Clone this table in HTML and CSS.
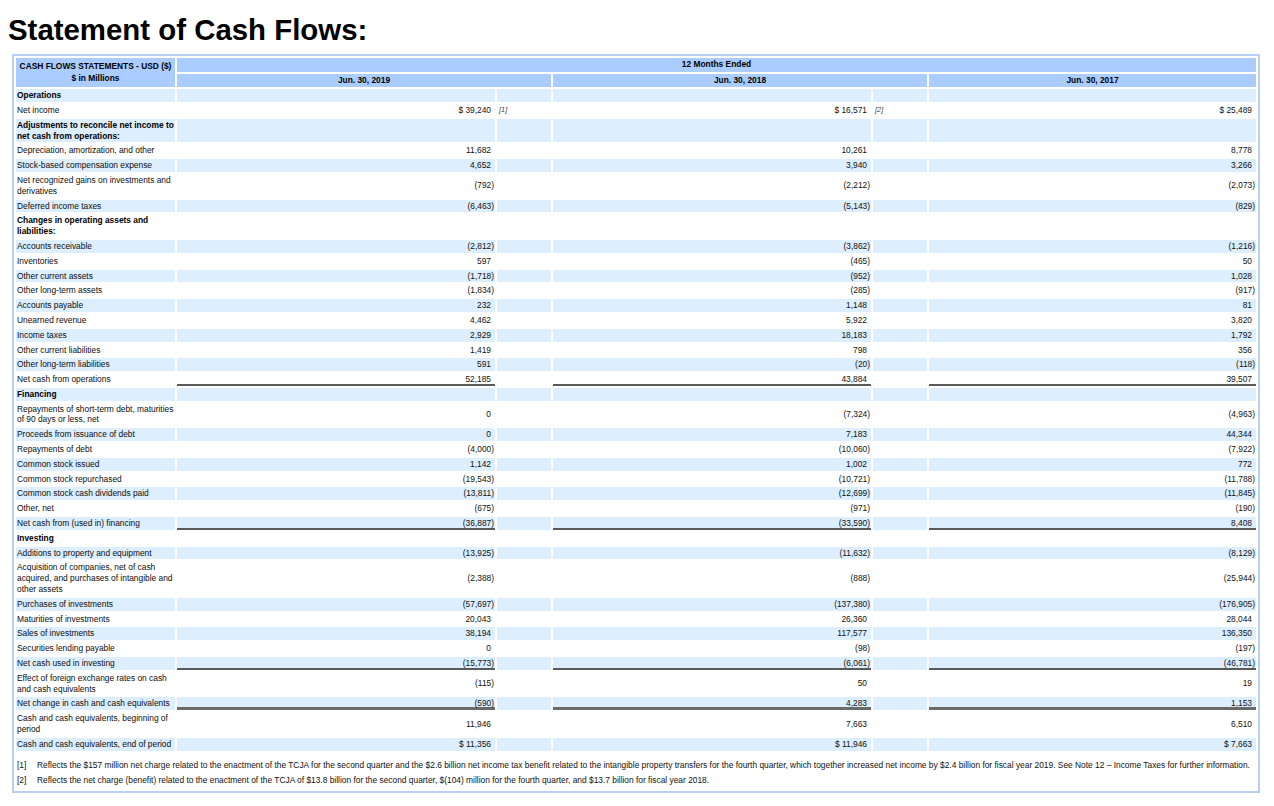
FILE: index.html
```html
<!DOCTYPE html>
<html lang="en">
<head>
<meta charset="utf-8">
<title>Statement of Cash Flows</title>
<link rel="stylesheet" href="styles.css">
</head>
<body>
<h1 class="page-title">Statement of Cash Flows:</h1>
<div class="report">
  <table class="statement">
    <colgroup>
      <col class="c-label"><col class="c-val"><col class="c-fn"><col class="c-val"><col class="c-fn"><col class="c-last">
    </colgroup>
    <thead>
      <tr><th rowspan="2" class="tl">CASH FLOWS STATEMENTS - USD ($)<br>$ in Millions</th><th colspan="5">12 Months Ended</th></tr>
      <tr><th colspan="2">Jun. 30, 2019</th><th colspan="2">Jun. 30, 2018</th><th>Jun. 30, 2017</th></tr>
    </thead>
    <tbody>
      <tr><td class="pl b">Operations</td><td></td><td></td><td></td><td></td><td></td></tr>
      <tr><td class="pl">Net income</td><td class="v">$ 39,240</td><td class="fn">[1]</td><td class="v">$ 16,571</td><td class="fn">[2]</td><td class="v">$ 25,489</td></tr>
      <tr><td class="pl b">Adjustments to reconcile net income to net cash from operations:</td><td></td><td></td><td></td><td></td><td></td></tr>
      <tr><td class="pl">Depreciation, amortization, and other</td><td class="v">11,682</td><td></td><td class="v">10,261</td><td></td><td class="v">8,778</td></tr>
      <tr><td class="pl">Stock-based compensation expense</td><td class="v">4,652</td><td></td><td class="v">3,940</td><td></td><td class="v">3,266</td></tr>
      <tr><td class="pl">Net recognized gains on investments and derivatives</td><td class="v n">(792)</td><td></td><td class="v n">(2,212)</td><td></td><td class="v n">(2,073)</td></tr>
      <tr><td class="pl">Deferred income taxes</td><td class="v n">(6,463)</td><td></td><td class="v n">(5,143)</td><td></td><td class="v n">(829)</td></tr>
      <tr><td class="pl b">Changes in operating assets and liabilities:</td><td></td><td></td><td></td><td></td><td></td></tr>
      <tr><td class="pl">Accounts receivable</td><td class="v n">(2,812)</td><td></td><td class="v n">(3,862)</td><td></td><td class="v n">(1,216)</td></tr>
      <tr><td class="pl">Inventories</td><td class="v">597</td><td></td><td class="v n">(465)</td><td></td><td class="v">50</td></tr>
      <tr><td class="pl">Other current assets</td><td class="v n">(1,718)</td><td></td><td class="v n">(952)</td><td></td><td class="v">1,028</td></tr>
      <tr><td class="pl">Other long-term assets</td><td class="v n">(1,834)</td><td></td><td class="v n">(285)</td><td></td><td class="v n">(917)</td></tr>
      <tr><td class="pl">Accounts payable</td><td class="v">232</td><td></td><td class="v">1,148</td><td></td><td class="v">81</td></tr>
      <tr><td class="pl">Unearned revenue</td><td class="v">4,462</td><td></td><td class="v">5,922</td><td></td><td class="v">3,820</td></tr>
      <tr><td class="pl">Income taxes</td><td class="v">2,929</td><td></td><td class="v">18,183</td><td></td><td class="v">1,792</td></tr>
      <tr><td class="pl">Other current liabilities</td><td class="v">1,419</td><td></td><td class="v">798</td><td></td><td class="v">356</td></tr>
      <tr><td class="pl">Other long-term liabilities</td><td class="v">591</td><td></td><td class="v n">(20)</td><td></td><td class="v n">(118)</td></tr>
      <tr class="total"><td class="pl">Net cash from operations</td><td class="v">52,185</td><td></td><td class="v">43,884</td><td></td><td class="v">39,507</td></tr>
      <tr><td class="pl b">Financing</td><td></td><td></td><td></td><td></td><td></td></tr>
      <tr><td class="pl">Repayments of short-term debt, maturities of 90 days or less, net</td><td class="v">0</td><td></td><td class="v n">(7,324)</td><td></td><td class="v n">(4,963)</td></tr>
      <tr><td class="pl">Proceeds from issuance of debt</td><td class="v">0</td><td></td><td class="v">7,183</td><td></td><td class="v">44,344</td></tr>
      <tr><td class="pl">Repayments of debt</td><td class="v n">(4,000)</td><td></td><td class="v n">(10,060)</td><td></td><td class="v n">(7,922)</td></tr>
      <tr><td class="pl">Common stock issued</td><td class="v">1,142</td><td></td><td class="v">1,002</td><td></td><td class="v">772</td></tr>
      <tr><td class="pl">Common stock repurchased</td><td class="v n">(19,543)</td><td></td><td class="v n">(10,721)</td><td></td><td class="v n">(11,788)</td></tr>
      <tr><td class="pl">Common stock cash dividends paid</td><td class="v n">(13,811)</td><td></td><td class="v n">(12,699)</td><td></td><td class="v n">(11,845)</td></tr>
      <tr><td class="pl">Other, net</td><td class="v n">(675)</td><td></td><td class="v n">(971)</td><td></td><td class="v n">(190)</td></tr>
      <tr class="total"><td class="pl">Net cash from (used in) financing</td><td class="v n">(36,887)</td><td></td><td class="v n">(33,590)</td><td></td><td class="v">8,408</td></tr>
      <tr><td class="pl b">Investing</td><td></td><td></td><td></td><td></td><td></td></tr>
      <tr><td class="pl">Additions to property and equipment</td><td class="v n">(13,925)</td><td></td><td class="v n">(11,632)</td><td></td><td class="v n">(8,129)</td></tr>
      <tr><td class="pl">Acquisition of companies, net of cash acquired, and purchases of intangible and other assets</td><td class="v n">(2,388)</td><td></td><td class="v n">(888)</td><td></td><td class="v n">(25,944)</td></tr>
      <tr><td class="pl">Purchases of investments</td><td class="v n">(57,697)</td><td></td><td class="v n">(137,380)</td><td></td><td class="v n">(176,905)</td></tr>
      <tr><td class="pl">Maturities of investments</td><td class="v">20,043</td><td></td><td class="v">26,360</td><td></td><td class="v">28,044</td></tr>
      <tr><td class="pl">Sales of investments</td><td class="v">38,194</td><td></td><td class="v">117,577</td><td></td><td class="v">136,350</td></tr>
      <tr><td class="pl">Securities lending payable</td><td class="v">0</td><td></td><td class="v n">(98)</td><td></td><td class="v n">(197)</td></tr>
      <tr class="total"><td class="pl">Net cash used in investing</td><td class="v n">(15,773)</td><td></td><td class="v n">(6,061)</td><td></td><td class="v n">(46,781)</td></tr>
      <tr><td class="pl">Effect of foreign exchange rates on cash and cash equivalents</td><td class="v n">(115)</td><td></td><td class="v">50</td><td></td><td class="v">19</td></tr>
      <tr class="total strong"><td class="pl">Net change in cash and cash equivalents</td><td class="v n">(590)</td><td></td><td class="v">4,283</td><td></td><td class="v">1,153</td></tr>
      <tr><td class="pl">Cash and cash equivalents, beginning of period</td><td class="v">11,946</td><td></td><td class="v">7,663</td><td></td><td class="v">6,510</td></tr>
      <tr><td class="pl">Cash and cash equivalents, end of period</td><td class="v">$ 11,356</td><td></td><td class="v">$ 11,946</td><td></td><td class="v">$ 7,663</td></tr>
    </tbody>
  </table>
  <table class="notes">
    <tr><td class="mk">[1]</td><td class="tx">Reflects the $157 million net charge related to the enactment of the TCJA for the second quarter and the $2.6 billion net income tax benefit related to the intangible property transfers for the fourth quarter, which together increased net income by $2.4 billion for fiscal year 2019. See Note 12 – Income Taxes for further information.</td></tr>
    <tr><td class="mk">[2]</td><td class="tx">Reflects the net charge (benefit) related to the enactment of the TCJA of $13.8 billion for the second quarter, $(104) million for the fourth quarter, and $13.7 billion for fiscal year 2018.</td></tr>
  </table>
</div>
</body>
</html>
```

FILE: styles.css
```css
html, body {
  background: #ffffff;
}
body {
  margin: 8px;
  font-family: "Liberation Sans", Arial, Helvetica, sans-serif;
  color: #111;
}
.page-title {
  margin: 5px 0 8px 0;
  font-size: 29.4px;
  line-height: 33px;
  font-weight: bold;
  color: #000;
}
.report {
  margin: 0 6px 0 4px;
  border: 2px solid #b7d0f4;
  padding-bottom: 2px;
}
.statement {
  width: 100%;
  table-layout: fixed;
  border-collapse: separate;
  border-spacing: 2px;
  font-size: 8.4px;
  line-height: 10.8px;
}
.c-label { width: 159px; }
.c-val { width: 318px; }
.c-fn { width: 54px; }
.c-last { width: 327px; }

.statement th {
  background: #aaccff;
  font-weight: bold;
  text-align: center;
  color: #000;
  padding: 1.4px 2px;
}
.statement th.tl {
  line-height: 11.6px;
}
.statement td {
  padding: 1px 4px 1px 1px;
  vertical-align: middle;
}
.statement tbody tr:nth-child(odd) td {
  background: #ddeeff;
}
.statement td.pl {
  vertical-align: top;
  text-align: left;
  color: #0d0d0d;
  padding-right: 0;
}
.statement td.b {
  font-weight: bold;
  color: #000;
}
.statement td.v {
  text-align: right;
  white-space: nowrap;
  color: #111;
}
.statement td.v.n {
  padding-right: 1px;
}
.statement td.fn {
  padding-left: 2px;
  font-style: italic;
  font-size: 7.4px;
  color: #444;
  text-align: left;
}
.statement tr.total td.v {
  box-shadow: inset 0 -2px 0 #5a5a5a;
}
.statement tr.total.strong td.v {
  box-shadow: inset 0 -3px 0 #6a6a6a;
}

.notes {
  margin-top: 4.6px;
  border-collapse: separate;
  border-spacing: 2px;
  font-size: 8.4px;
  line-height: 10.8px;
  color: #111;
}
.notes td {
  padding: 1px 0;
  vertical-align: top;
  white-space: nowrap;
}
.notes td.mk {
  width: 16px;
  padding-left: 1px;
}
.notes td.tx {
  padding-left: 2px;
}
```
